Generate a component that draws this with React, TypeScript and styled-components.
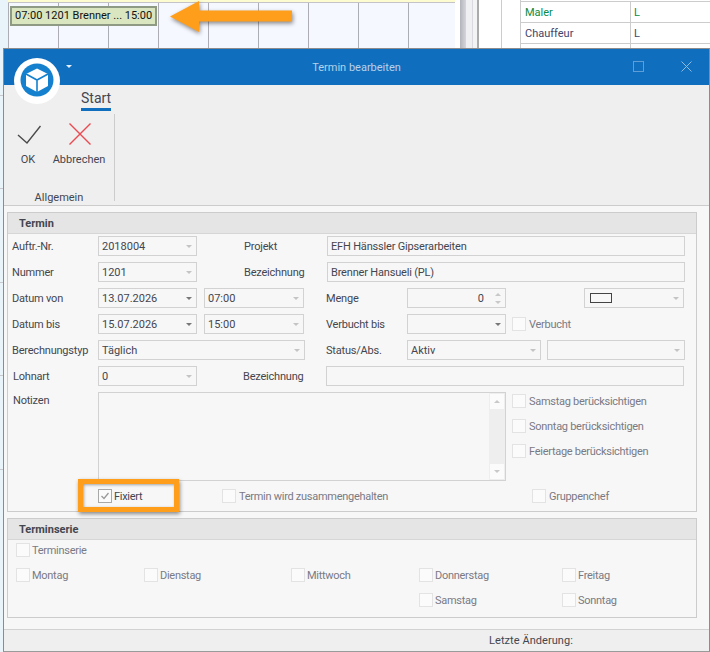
import styled, { createGlobalStyle } from "styled-components";

const GlobalStyle = createGlobalStyle`
  html, body {
    margin: 0;
    padding: 0;
    background: #fff;
  }
  * {
    box-sizing: border-box;
  }
`;

const Page = styled.div`
  position: relative;
  width: 710px;
  height: 652px;
  overflow: hidden;
  font-family: Roboto, "Liberation Sans", sans-serif;
  font-size: 11px;
  color: #44464f;
`;

/* Scheduler behind the dialog */
const Backdrop = styled.div`
  display: flex;
  height: 48px;
`;

const BackdropEdge = styled.div`
  width: 8px;
  background: #e8f3fa;
`;

const Timeline = styled.div`
  position: relative;
  width: 447px;
  border-top: 2px solid #fdfbd0;
  background: repeating-linear-gradient(
    90deg,
    #adadb5 0,
    #adadb5 1px,
    #f6f8ff 1px,
    #f6f8ff 50px
  );
  box-shadow: inset 0 1px 0 #c4c4c8;
`;

const Appointment = styled.div`
  position: absolute;
  top: 4px;
  left: 2px;
  width: 147px;
  height: 20px;
  padding-left: 3px;
  border: 2px solid #8f9a85;
  background: #d9e6c0;
  color: #111;
  font-size: 11px;
  line-height: 16px;
  white-space: nowrap;
`;

const ScrollBars = styled.div`
  width: 47px;
  background: linear-gradient(
    90deg,
    #fff 0,
    #fff 5px,
    #b4b4bc 5px,
    #d6d6dc 11px,
    #f0f0f3 11px,
    #f0f0f3 17px,
    #c0c0c6 17px,
    #f3f3f6 18px,
    #f3f3f6 22px,
    #aaa 22px,
    #aaa 24px,
    #fff 24px,
    #fff 46px,
    #ccc 46px,
    #ccc 47px
  );
`;

const Gutter = styled.div`
  width: 19px;
  background: #fff;
  border-right: 1px solid #ccc;
`;

const SideTable = styled.div`
  flex: 1;
  padding-top: 1px;
  background: #fff;
`;

const SideRow = styled.div<{ $color: string }>`
  display: flex;
  height: 21px;
  border-top: 1px solid #ccc;
  color: ${(p) => p.$color};
  line-height: 22px;
`;

const SideName = styled.div`
  width: 110px;
  padding-left: 4px;
  border-right: 1px solid #ccc;
`;

const SideValue = styled.div`
  padding-left: 3px;
`;

/* Dialog */
const Lower = styled.div`
  display: flex;
  height: 604px;
`;

const LeftEdge = styled.div`
  width: 3px;
  background: repeating-linear-gradient(
    180deg,
    #e8f3fa 0,
    #e8f3fa 47px,
    #c9c9cd 47px,
    #c9c9cd 48px,
    #e8f3fa 48px,
    #e8f3fa 93.5px
  );
`;

const Dialog = styled.div`
  display: flex;
  flex-direction: column;
  width: 707px;
  border: 1px solid #8c8c8c;
  border-bottom-color: #9a9a9a;
  background: #f7f7f7;
`;

const TitleBar = styled.div`
  position: relative;
  flex: none;
  height: 36px;
  background: #106ebe;
  color: #b5d2ea;
  font-size: 11px;
  line-height: 37px;
  text-align: center;
`;

const WindowButton = styled.svg<{ $left: number }>`
  position: absolute;
  top: 12px;
  left: ${(p) => p.$left}px;
`;

const Logo = styled.svg`
  position: absolute;
  top: 9px;
  left: 10px;
`;

const QuickArrow = styled.div`
  position: absolute;
  top: 16px;
  left: 62px;
  width: 0;
  height: 0;
  border-left: 3px solid transparent;
  border-right: 3px solid transparent;
  border-top: 3px solid #e8f1f9;
`;

const Ribbon = styled.div`
  flex: none;
  height: 121px;
  padding-left: 77px;
  border-bottom: 1px solid #ccc;
  background: #efefef;
`;

const TabLabel = styled.div`
  width: 30px;
  margin-top: 5px;
  height: 21px;
  border-bottom: 3px solid #106ebe;
  font-size: 14px;
  line-height: 17px;
  white-space: nowrap;
`;

const RibbonGroup = styled.div`
  display: flex;
  flex-direction: column;
  width: 111px;
  height: 87px;
  margin-top: 3px;
  margin-left: -77px;
  border-right: 1px solid #ccc;
`;

const RibbonButtons = styled.div`
  display: flex;
  flex: 1;
`;

const RibbonButton = styled.div<{ $width: number }>`
  display: flex;
  flex-direction: column;
  align-items: center;
  width: ${(p) => p.$width}px;
  padding-top: 9px;
  line-height: 15px;
`;

const RibbonIcon = styled.svg`
  margin-bottom: 5px;
`;

const GroupCaption = styled.div`
  margin-bottom: -4px;
  line-height: 15px;
  text-align: center;
`;

const Body = styled.div`
  display: flex;
  flex: 1;
  flex-direction: column;
  gap: 6px;
  padding: 6px 0 0 3px;
`;

const GroupBox = styled.section<{ $height: number }>`
  width: 690px;
  height: ${(p) => p.$height}px;
  border: 1px solid #ccc;
`;

const GroupHeader = styled.div`
  height: 21px;
  padding-left: 11px;
  border-bottom: 1px solid #d6d6d6;
  background: #e5e5e5;
  font-weight: 700;
  line-height: 21px;
`;

const FormRows = styled.div`
  display: flex;
  flex-direction: column;
  gap: 6px;
  padding: 2px 0 0 4px;
`;

const Row = styled.div`
  display: flex;
  align-items: center;
  height: 20px;
`;

const Label = styled.div<{ $w: number; $ml?: number }>`
  flex: none;
  width: ${(p) => p.$w}px;
  margin-left: ${(p) => p.$ml ?? 0}px;
  letter-spacing: -0.2px;
  white-space: nowrap;
`;

const Field = styled.div<{ $w: number; $ml?: number }>`
  display: flex;
  flex: none;
  align-items: center;
  justify-content: space-between;
  width: ${(p) => p.$w}px;
  height: 20px;
  margin-left: ${(p) => p.$ml ?? 0}px;
  padding: 0 4px 0 3px;
  border: 1px solid #d2d2d2;
  white-space: nowrap;
`;

const WideField = styled(Field)`
  letter-spacing: -0.18px;
`;

const Caret = styled.span<{ $active?: boolean }>`
  flex: none;
  width: 0;
  height: 0;
  border-left: 3px solid transparent;
  border-right: 3px solid transparent;
  border-top: 3px solid ${(p) => (p.$active ? "#777" : "#c4c4c4")};
`;

const NumberValue = styled.span`
  margin-left: auto;
`;

const Spinner = styled.span`
  display: flex;
  flex: none;
  flex-direction: column;
  gap: 5px;
  margin-left: 11px;
`;

const SpinUp = styled.span`
  width: 0;
  height: 0;
  border-left: 3px solid transparent;
  border-right: 3px solid transparent;
  border-bottom: 3px solid #c8c8c8;
`;

const SpinDown = styled(Caret)`
  border-top-color: #c8c8c8;
`;

const Swatch = styled.span`
  width: 22px;
  height: 10px;
  margin-left: 2px;
  border: 1px solid #444;
`;

const NotesRow = styled.div`
  display: flex;
  height: 89px;
`;

const NotesLabel = styled(Label)`
  line-height: 17px;
`;

const NotesBox = styled.div`
  display: flex;
  flex: none;
  justify-content: flex-end;
  width: 408px;
  border: 1px solid #d2d2d2;
`;

const ScrollTrack = styled.div`
  display: flex;
  flex-direction: column;
  justify-content: space-between;
  width: 16px;
  background: #eeeeee;
`;

const ScrollButton = styled.div`
  display: flex;
  align-items: center;
  justify-content: center;
  height: 15px;
  margin: 1px;
  background: #fbfbfb;
`;

const SideChecks = styled.div`
  display: flex;
  flex-direction: column;
  gap: 11px;
  margin: 2px 0 0 6px;
`;

const CheckWrap = styled.div<{ $col?: number }>`
  display: flex;
  flex: none;
  align-items: center;
  gap: 3px;
  height: 14px;
  grid-column: ${(p) => p.$col ?? "auto"};
  color: #7a7a84;
  letter-spacing: -0.28px;
  white-space: nowrap;
`;

const InlineCheck = styled(CheckWrap)`
  margin-left: 6px;
`;

const CheckBox = styled.span<{ $checked?: boolean }>`
  display: flex;
  flex: none;
  align-items: center;
  justify-content: center;
  width: 14px;
  height: 14px;
  border: 1px solid ${(p) => (p.$checked ? "#a8a8a8" : "#e3e3e3")};
  background: #fbfbfb;
`;

const FixedText = styled.span`
  margin-left: -1px;
  color: #44464f;
`;

const CheckRow = styled.div`
  display: grid;
  grid-template-columns: 124px 310px 1fr;
  margin-top: 8px;
  padding-left: 90px;
`;

const SeriesGrid = styled.div`
  display: grid;
  grid-template-columns: 128px 147px 128px 143px 1fr;
  grid-auto-rows: 14px;
  row-gap: 11px;
  padding: 3px 0 0 8px;

  ${CheckWrap} {
    gap: 2px;
  }
`;

const SeriesFirst = styled(CheckWrap)`
  grid-column: 1 / -1;
`;

const StatusBar = styled.div`
  flex: none;
  height: 22px;
  padding-left: 485px;
  border-top: 1px solid #d2d2d2;
  background: #efefef;
  letter-spacing: 0.06px;
  line-height: 21px;
`;

/* Annotations laid over the screenshot */
const ArrowMark = styled.svg`
  position: absolute;
  top: 1px;
  left: 170px;
  filter: drop-shadow(1px 2px 2px rgba(0, 0, 0, 0.45));
`;

const HighlightBox = styled.div`
  position: absolute;
  top: 479px;
  left: 78px;
  width: 101px;
  height: 33px;
  border: 5px solid #ff9e1b;
  box-shadow: 1px 2px 4px rgba(0, 0, 0, 0.45), inset 1px 1px 3px rgba(0, 0, 0, 0.35);
`;

function Check({ label, col }: { label: string; col?: number }) {
  return (
    <CheckWrap $col={col}>
      <CheckBox />
      {label}
    </CheckWrap>
  );
}

export default function App() {
  return (
    <Page>
      <GlobalStyle />
      <Backdrop>
        <BackdropEdge />
        <Timeline>
          <Appointment>07:00 1201 Brenner ... 15:00</Appointment>
        </Timeline>
        <ScrollBars />
        <Gutter />
        <SideTable>
          <SideRow $color="#0b8a43">
            <SideName>Maler</SideName>
            <SideValue>L</SideValue>
          </SideRow>
          <SideRow $color="#44446a">
            <SideName>Chauffeur</SideName>
            <SideValue>L</SideValue>
          </SideRow>
          <SideRow $color="#44446a">
            <SideName />
          </SideRow>
        </SideTable>
      </Backdrop>

      <Lower>
        <LeftEdge />
        <Dialog>
          <TitleBar>
            Termin bearbeiten
            <QuickArrow />
            <WindowButton $left={629} width="11" height="11" viewBox="0 0 11 11">
              <rect x="0.5" y="0.5" width="10" height="10" fill="none" stroke="#5f9dd6" />
            </WindowButton>
            <WindowButton $left={677} width="11" height="11" viewBox="0 0 11 11">
              <path d="M0.5 0.5 L10.5 10.5 M10.5 0.5 L0.5 10.5" stroke="#8fbbe2" fill="none" />
            </WindowButton>
            <Logo width="46" height="46" viewBox="0 0 46 46">
              <circle cx="23" cy="23" r="23" fill="#fff" />
              <circle cx="23" cy="22" r="16.5" fill="#1480ce" />
              <path d="M23 10.5 L34 16 V28 L23 34 L12 28 V16 Z" fill="#fff" />
              <path d="M12 16 L23 22 L34 16 M23 22 V34" fill="none" stroke="#1480ce" strokeWidth="1.6" />
            </Logo>
          </TitleBar>

          <Ribbon>
            <TabLabel>Start</TabLabel>
            <RibbonGroup>
              <RibbonButtons>
                <RibbonButton $width={48}>
                  <RibbonIcon width="26" height="24" viewBox="0 0 26 24">
                    <path d="M3 12 L12 20 L25.5 3" fill="none" stroke="#4a4a4a" strokeWidth="1.4" />
                  </RibbonIcon>
                  OK
                </RibbonButton>
                <RibbonButton $width={54}>
                  <RibbonIcon width="24" height="24" viewBox="0 0 24 24">
                    <path d="M2.5 0.5 L23.5 21.5 M23.5 0.5 L2.5 21.5" fill="none" stroke="#ea4a50" strokeWidth="1.4" />
                  </RibbonIcon>
                  Abbrechen
                </RibbonButton>
              </RibbonButtons>
              <GroupCaption>Allgemein</GroupCaption>
            </RibbonGroup>
          </Ribbon>

          <Body>
            <GroupBox $height={300}>
              <GroupHeader>Termin</GroupHeader>
              <FormRows>
                <Row>
                  <Label $w={86}>Auftr.-Nr.</Label>
                  <Field $w={99}>
                    2018004
                    <Caret />
                  </Field>
                  <Label $w={83} $ml={47}>Projekt</Label>
                  <WideField $w={358}>EFH Hänssler Gipserarbeiten</WideField>
                </Row>
                <Row>
                  <Label $w={86}>Nummer</Label>
                  <Field $w={99}>
                    1201
                    <Caret />
                  </Field>
                  <Label $w={83} $ml={47}>Bezeichnung</Label>
                  <WideField $w={358}>Brenner Hansueli (PL)</WideField>
                </Row>
                <Row>
                  <Label $w={86}>Datum von</Label>
                  <Field $w={99}>
                    13.07.2026
                    <Caret $active />
                  </Field>
                  <Field $w={100} $ml={7}>
                    07:00
                    <Caret />
                  </Field>
                  <Label $w={81} $ml={22}>Menge</Label>
                  <Field $w={99}>
                    <NumberValue>0</NumberValue>
                    <Spinner>
                      <SpinUp />
                      <SpinDown />
                    </Spinner>
                  </Field>
                  <Field $w={100} $ml={78}>
                    <Swatch />
                    <Caret />
                  </Field>
                </Row>
                <Row>
                  <Label $w={86}>Datum bis</Label>
                  <Field $w={99}>
                    15.07.2026
                    <Caret $active />
                  </Field>
                  <Field $w={100} $ml={7}>
                    15:00
                    <Caret />
                  </Field>
                  <Label $w={81} $ml={22}>Verbucht bis</Label>
                  <Field $w={99}>
                    <span />
                    <Caret $active />
                  </Field>
                  <InlineCheck>
                    <CheckBox />
                    Verbucht
                  </InlineCheck>
                </Row>
                <Row>
                  <Label $w={86}>Berechnungstyp</Label>
                  <Field $w={207}>
                    Täglich
                    <Caret />
                  </Field>
                  <Label $w={81} $ml={21}>Status/Abs.</Label>
                  <Field $w={134}>
                    Aktiv
                    <Caret />
                  </Field>
                  <Field $w={138} $ml={6}>
                    <span />
                    <Caret />
                  </Field>
                </Row>
                <Row>
                  <Label $w={85} $ml={1}>Lohnart</Label>
                  <Field $w={99}>
                    0
                    <Caret />
                  </Field>
                  <Label $w={83} $ml={46}>Bezeichnung</Label>
                  <Field $w={358} />
                </Row>
                <NotesRow>
                  <NotesLabel $w={85} $ml={1}>Notizen</NotesLabel>
                  <NotesBox>
                    <ScrollTrack>
                      <ScrollButton>
                        <SpinUp />
                      </ScrollButton>
                      <ScrollButton>
                        <SpinDown />
                      </ScrollButton>
                    </ScrollTrack>
                  </NotesBox>
                  <SideChecks>
                    <Check label="Samstag berücksichtigen" />
                    <Check label="Sonntag berücksichtigen" />
                    <Check label="Feiertage berücksichtigen" />
                  </SideChecks>
                </NotesRow>
              </FormRows>
              <CheckRow>
                <CheckWrap>
                  <CheckBox $checked>
                    <svg width="10" height="10" viewBox="0 0 10 10">
                      <path d="M1.5 5 L4 7.5 L8.5 2" fill="none" stroke="#9a9a9a" strokeWidth="1.3" />
                    </svg>
                  </CheckBox>
                  <FixedText>Fixiert</FixedText>
                </CheckWrap>
                <Check label="Termin wird zusammengehalten" />
                <Check label="Gruppenchef" />
              </CheckRow>
            </GroupBox>

            <GroupBox $height={100}>
              <GroupHeader>Terminserie</GroupHeader>
              <SeriesGrid>
                <SeriesFirst>
                  <CheckBox />
                  Terminserie
                </SeriesFirst>
                <Check label="Montag" />
                <Check label="Dienstag" />
                <Check label="Mittwoch" />
                <Check label="Donnerstag" />
                <Check label="Freitag" />
                <Check label="Samstag" col={4} />
                <Check label="Sonntag" col={5} />
              </SeriesGrid>
            </GroupBox>
          </Body>

          <StatusBar>Letzte Änderung:</StatusBar>
        </Dialog>
      </Lower>

      <ArrowMark width="122" height="32" viewBox="0 0 122 32">
        <path d="M0 15.5 L29 0 V9.5 H122 V20.5 H29 V31 Z" fill="#ff9e1b" />
      </ArrowMark>
      <HighlightBox />
    </Page>
  );
}
